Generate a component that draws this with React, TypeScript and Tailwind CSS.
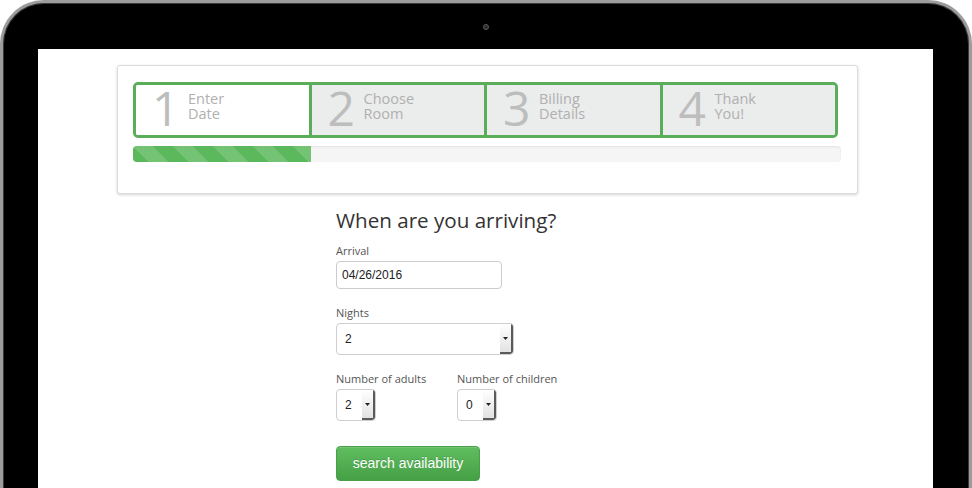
import React from "react";

const steps = [
  { n: "1", a: "Enter", b: "Date", active: true },
  { n: "2", a: "Choose", b: "Room", active: false },
  { n: "3", a: "Billing", b: "Details", active: false },
  { n: "4", a: "Thank", b: "You!", active: false },
];

function SelectBox({ value, width }: { value: string; width: string }) {
  return (
    <div
      className={`flex h-[32px] ${width} rounded-[4px] border border-[#cfcfcf] bg-white overflow-hidden`}
    >
      <div className="flex-1 flex items-center pl-[8px] text-[12px] text-[#222] font-['Liberation_Sans',Arial,sans-serif]">
        {value}
      </div>
      <div className="w-[13px] flex items-center justify-center bg-[linear-gradient(to_bottom,#ffffff,#e2e2e2)] border-r-[2px] border-b-[2px] border-[#5a5a5a] rounded-br-[3px]">
        <svg width="5" height="3" viewBox="0 0 5 3">
          <path d="M0 0 L5 0 L2.5 3 Z" fill="#222" />
        </svg>
      </div>
    </div>
  );
}

export default function App() {
  return (
    <div className="w-[972px] h-[488px] overflow-hidden bg-white relative">
      <div className="h-[520px] rounded-t-[44px] border-[3px] border-b-0 border-[#9c9c9c] bg-black pt-[46px] pl-[35px] pr-[36px] relative shadow-[inset_0_0_0_1px_#3a3a3a]">
        <div className="absolute left-[480px] top-[21px] w-[6px] h-[6px] rounded-full bg-[#2a2a2a] border border-[#5a5a5a]" />
        <div className="h-full bg-white pt-[16px]">
          {/* Wizard card */}
          <div className="ml-[79px] w-[741px] h-[129px] rounded-[3px] border border-[#dcdcdc] shadow-[0_1px_3px_rgba(0,0,0,0.18)] bg-white pt-[16px] pl-[15px]">
            <div className="flex w-[705px] h-[56px] rounded-[5px] border-[3px] border-[#5aad5a] overflow-hidden font-['Open_Sans',sans-serif]">
              {steps.map((s, i) => (
                <div
                  key={s.n}
                  className={`flex-1 flex items-center pl-[16px] pb-[4px] ${
                    s.active ? "bg-white" : "bg-[#ebecec]"
                  } ${i > 0 ? "border-l-[3px] border-[#5aad5a]" : ""}`}
                >
                  <div className="w-[36px] shrink-0 text-[48px] leading-[50px] font-normal text-[#bdbdbd]">
                    {s.n}
                  </div>
                  <div className="text-[14.5px] leading-[15px] text-[#b0b0b0] mb-[5px]">
                    <div>{s.a}</div>
                    <div>{s.b}</div>
                  </div>
                </div>
              ))}
            </div>
            <div className="mt-[8px] w-[708px] h-[16px] rounded-[4px] bg-[#f5f5f5] shadow-[inset_0_1px_2px_rgba(0,0,0,0.08)] overflow-hidden">
              <div className="h-full w-[178px] bg-[#5cb85c] bg-[linear-gradient(45deg,rgba(255,255,255,0.15)_25%,transparent_25%,transparent_50%,rgba(255,255,255,0.15)_50%,rgba(255,255,255,0.15)_75%,transparent_75%,transparent)] bg-[length:40px_40px]" />
            </div>
          </div>

          {/* Form */}
          <div className="ml-[298px] mt-[15px] font-['Open_Sans',sans-serif]">
            <h1 className="text-[20.6px] leading-[23px] text-[#333]">
              When are you arriving?
            </h1>
            <div className="mt-[11px] text-[11px] leading-[16px] text-[#555]">Arrival</div>
            <div className="mt-[2px] w-[166px] h-[28px] rounded-[4px] border border-[#cccccc] flex items-center pl-[5px] text-[12px] text-[#222] font-['Liberation_Sans',Arial,sans-serif]">
              04/26/2016
            </div>
            <div className="mt-[16px] text-[11px] leading-[16px] text-[#555]">Nights</div>
            <div className="mt-[2px]">
              <SelectBox value="2" width="w-[178px]" />
            </div>
            <div className="mt-[16px] flex">
              <div className="w-[121px]">
                <div className="text-[11px] leading-[16px] text-[#555]">Number of adults</div>
                <div className="mt-[2px]">
                  <SelectBox value="2" width="w-[40px]" />
                </div>
              </div>
              <div>
                <div className="text-[11px] leading-[16px] text-[#555]">Number of children</div>
                <div className="mt-[2px]">
                  <SelectBox value="0" width="w-[40px]" />
                </div>
              </div>
            </div>
            <button className="mt-[25px] w-[144px] h-[35px] rounded-[4px] border border-[#4a9e4a] bg-[linear-gradient(to_bottom,#5fbd5f,#46a046)] text-white text-[14px] font-['Liberation_Sans',Arial,sans-serif] [text-shadow:0_-1px_0_rgba(0,0,0,0.15)] shadow-[inset_0_1px_0_rgba(255,255,255,0.15)]">
              search availability
            </button>
          </div>
        </div>
      </div>
    </div>
  );
}
